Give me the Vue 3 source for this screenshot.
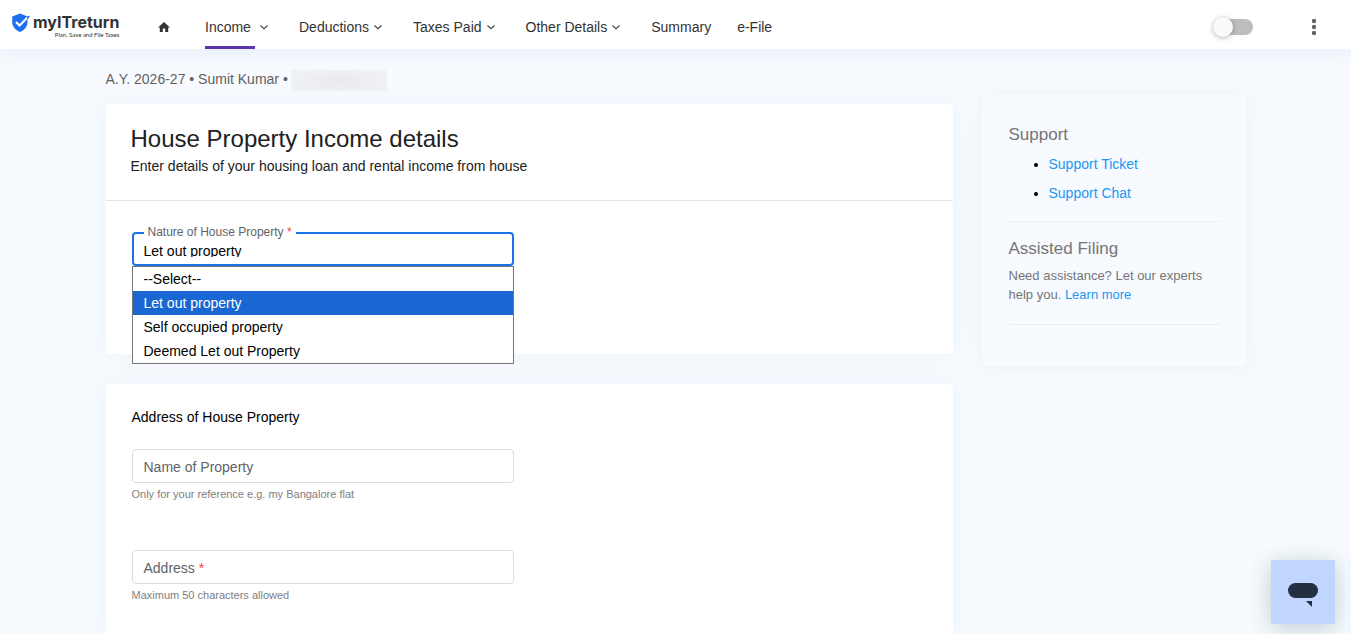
<script setup>
import { ref } from 'vue'

const menus = [
  { label: 'Income', href: '#income', active: true, caret: true },
  { label: 'Deductions', href: '#deductions', caret: true },
  { label: 'Taxes Paid', href: '#taxes', caret: true },
  { label: 'Other Details', href: '#other', caret: true },
  { label: 'Summary', href: '#summary' },
  { label: 'e-File', href: '#efile' },
]

const options = ['--Select--', 'Let out property', 'Self occupied property', 'Deemed Let out Property']
const nature = ref('Let out property')
const propertyName = ref('')
const address = ref('')
const enabled = ref(false)
</script>

<template>
  <div class="page">
    <header class="topbar">
      <a class="brand" href="#home" aria-label="myITreturn">
        <svg class="shield" viewBox="0 0 18 20" aria-hidden="true">
          <path fill="#1d6ff2" d="M8 .500 15.500 3.500V9c0 4.500-2.900 8-7.500 10C3.400 17 .200 13.500 .200 9V3.500Z" />
          <path fill="none" stroke="#fff" stroke-width="2.200" d="M4 9l3.500 3.500L16 4" />
          <path fill="#1d6ff2" d="M14.800 3.600 18.300 2.600 15.600 6.800Z" />
        </svg>
        <span class="brand-text">
          <span class="brand-name">myITreturn</span>
          <span class="brand-tag">Plan, Save and File Taxes</span>
        </span>
      </a>
      <nav class="nav">
        <a class="home" href="#dashboard" aria-label="Home">
          <svg viewBox="0 0 12 10" aria-hidden="true">
            <path fill="#333" d="M6 0 12 5.400H10.200V10H7.200V6.600H4.800V10H1.800V5.400H0Z" />
          </svg>
        </a>
        <a v-for="m in menus" :key="m.label" class="item" :class="{ active: m.active }" :href="m.href">
          <span class="item-label">{{ m.label }}</span>
          <svg v-if="m.caret" class="caret" viewBox="0 0 18 18" aria-hidden="true">
            <path fill="none" stroke="#444" stroke-width="1.200" d="M5.500 7.500 9 10.800l3.500-3.300" />
          </svg>
        </a>
      </nav>
      <input v-model="enabled" class="toggle" type="checkbox" role="switch" aria-label="Switch mode" />
      <button class="more" type="button" aria-label="More options">
        <svg viewBox="0 0 6 18" aria-hidden="true">
          <g fill="#5f6368"><circle cx="3" cy="3" r="2.200" /><circle cx="3" cy="9" r="2.200" /><circle cx="3" cy="15" r="2.200" /></g>
        </svg>
      </button>
    </header>

    <div class="layout">
      <main class="main">
        <p class="crumbs">A.Y. 2026-27 • Sumit Kumar • <span class="masked"></span></p>

        <section class="card details">
          <div class="card-head">
            <h1>House Property Income details</h1>
            <p>Enter details of your housing loan and rental income from house</p>
          </div>
          <div class="card-body">
            <div class="select-field">
              <label for="nature">Nature of House Property <span class="req">*</span></label>
              <select id="nature" v-model="nature">
                <option v-for="o in options" :key="o">{{ o }}</option>
              </select>
              <ul class="options" role="listbox" aria-label="Nature of House Property">
                <li v-for="o in options" :key="o" role="option" :aria-selected="o === nature" :class="{ chosen: o === nature }" @click="nature = o">{{ o }}</li>
              </ul>
            </div>
          </div>
        </section>

        <section class="card address">
          <h2>Address of House Property</h2>
          <div class="fields">
            <div class="text-field">
              <div class="box">
                <label v-show="!propertyName" for="pname">Name of Property</label>
                <input id="pname" v-model="propertyName" type="text" />
              </div>
              <small>Only for your reference e.g. my Bangalore flat</small>
            </div>
            <div class="text-field">
              <div class="box">
                <label v-show="!address" for="addr">Address <span class="req">*</span></label>
                <input id="addr" v-model="address" type="text" maxlength="50" />
              </div>
              <small>Maximum 50 characters allowed</small>
            </div>
          </div>
        </section>
      </main>

      <aside class="side">
        <h2>Support</h2>
        <ul>
          <li><a href="#ticket">Support Ticket</a></li>
          <li><a href="#chat">Support Chat</a></li>
        </ul>
        <hr />
        <h2>Assisted Filing</h2>
        <p>Need assistance? Let our experts help you. <a href="#experts">Learn more</a></p>
        <hr />
      </aside>
    </div>

    <button class="chat" type="button" aria-label="Open chat">
      <svg viewBox="0 0 64 64" aria-hidden="true">
        <rect x="17" y="23" width="30" height="15" rx="7.500" fill="#242f42" />
        <path fill="#242f42" d="M35 41h6v6Z" />
      </svg>
    </button>
  </div>
</template>

<style>
body {
  margin: 0;
  background: #f7fbff;
}
</style>

<style scoped>
.page {
  display: flex;
  flex-direction: column;
  min-height: 100vh;
  font-family: "Liberation Sans", Arial, sans-serif;
  font-size: 14px;
  color: #212121;
}
.page *,
.page *::before {
  box-sizing: border-box;
}
h1,
h2,
p,
ul {
  margin: 0;
  padding: 0;
  font-weight: 400;
}
a {
  color: #2196f3;
  text-decoration: none;
}
button {
  padding: 0;
  border: 0;
  background: none;
}
.topbar {
  display: flex;
  align-items: center;
  height: 49px;
  padding: 0 34px 0 12px;
  background: #fff;
  box-shadow: 0 0 24px rgba(40, 80, 160, 0.1);
}
.brand {
  display: flex;
  gap: 3px;
  width: 143px;
  margin-top: 2px;
  color: #333;
}
.shield {
  width: 18px;
  height: 20px;
}
.brand-text {
  display: flex;
  flex-direction: column;
  align-items: flex-end;
}
.brand-name {
  font-family: Inter, sans-serif;
  font-size: 16px;
  font-weight: 700;
  line-height: 19px;
}
.brand-tag {
  font-family: Lato, sans-serif;
  font-size: 6px;
  line-height: 6px;
}
.nav {
  display: flex;
  align-self: stretch;
  flex: 1;
}
.home {
  display: flex;
  align-items: center;
  width: 37px;
  padding: 4px 0 0 3px;
}
.home svg {
  width: 12px;
  height: 10px;
}
.item {
  display: flex;
  align-items: center;
  padding: 0 13px;
  color: #333;
  white-space: nowrap;
}
.item-label {
  display: flex;
  align-items: center;
  height: 100%;
  padding: 9px 0 2px;
  border-bottom: 3px solid transparent;
}
.active .item-label {
  width: 50px;
  border-color: #5e35b1;
}
.caret {
  width: 18px;
  height: 18px;
  margin-top: 4px;
}
.toggle {
  appearance: none;
  display: flex;
  align-items: center;
  width: 36px;
  height: 16px;
  margin: 4px 58px 0 0;
  border-radius: 8px;
  background: #bdbdbd;
}
.toggle::before {
  content: "";
  flex: none;
  width: 20px;
  height: 20px;
  margin-left: -4px;
  border-radius: 50%;
  background: #fafafa;
  box-shadow: 0 1px 5px rgba(0, 0, 0, 0.3);
}
.toggle:checked::before {
  margin-left: 20px;
}
.more {
  width: 6px;
  height: 18px;
  margin-top: 4px;
}
.more svg {
  display: block;
}
.layout {
  display: grid;
  grid-template-columns: minmax(0, 1fr) 264px;
  gap: 29px;
  flex: 1;
  width: 100%;
  max-width: 1140px;
  margin: 0 auto;
}
.main {
  display: flex;
  flex-direction: column;
}
.crumbs {
  display: flex;
  gap: 3px;
  height: 21px;
  margin: 21px 0 13px;
  color: #616161;
  line-height: 18px;
}
.masked {
  width: 96px;
  height: 21px;
  background: radial-gradient(ellipse, #e8eaf0, #f1f3f8);
}
.card {
  border-radius: 4px;
  background: #fff;
  box-shadow: 0 0 24px rgba(40, 80, 140, 0.06);
}
.details {
  min-height: 250px;
  margin-bottom: 30px;
}
.card-head {
  height: 97px;
  padding: 20px 25px;
  border-bottom: 1px solid #e4e5e7;
}
h1 {
  font-size: 24px;
  line-height: 30px;
}
.card-head p {
  line-height: 24px;
}
.card-body {
  display: grid;
  grid-template-columns: 1fr 1fr;
  gap: 31px;
  padding: 31px 26px;
}
.select-field {
  position: relative;
  height: 34px;
  padding: 9px 10px 0 8px;
  border: 2px solid #1a73e8;
  border-radius: 4px;
}
.select-field label {
  position: absolute;
  top: -9px;
  left: 10px;
  padding: 0 4px;
  background: #fff;
  color: #5f6368;
  font-size: 12px;
  line-height: 14px;
}
.req {
  color: #f44336;
}
select {
  appearance: none;
  display: block;
  width: 100%;
  height: 14px;
  padding: 0 2px;
  border: 0;
  outline: 0;
  background: transparent;
  color: #000;
  font: inherit;
}
.options {
  position: absolute;
  z-index: 2;
  top: 32px;
  left: -2px;
  right: -2px;
  border: 1px solid #757575;
  background: #fff;
  color: #000;
  list-style: none;
}
.options li {
  padding: 0 11px;
  line-height: 24px;
}
.options .chosen {
  background: #1967d2;
  color: #fff;
}
.address {
  flex: 1;
  padding: 22px 26px 29px;
  border-radius: 4px 4px 0 0;
}
.address h2 {
  color: #000;
  font-size: 14px;
  line-height: 22px;
}
.fields {
  display: grid;
  grid-template-rows: 101px auto;
  width: calc(50% - 15px);
  margin-top: 21px;
}
.box {
  position: relative;
  height: 34px;
  border: 1px solid #dadce0;
  border-radius: 4px;
}
.box label {
  position: absolute;
  top: 0;
  left: 11px;
  color: #5f6368;
  line-height: 34px;
}
.box input {
  width: 100%;
  height: 100%;
  padding: 0 10px;
  border: 0;
  outline: 0;
  background: transparent;
  font: inherit;
}
.text-field small {
  display: block;
  margin-top: 4px;
  color: #808080;
  font-size: 11px;
  line-height: 14px;
}
.side {
  align-self: start;
  min-height: 272px;
  margin-top: 45px;
  padding: 28px 26px 40px 27px;
  border-radius: 4px;
  box-shadow: 0 2px 20px rgba(40, 60, 100, 0.06);
  color: #757575;
}
.side h2 {
  padding-top: 1px;
  font-size: 17px;
  line-height: 24px;
}
.side ul {
  margin-top: 3px;
  padding-left: 40px;
}
.side li {
  height: 29px;
  line-height: 29px;
}
.side li::marker {
  color: #000;
}
.side hr {
  height: 1px;
  margin: 13px 0 14px;
  border: 0;
  background: #eceef0;
}
.side p {
  margin-top: 5px;
  font-size: 13px;
  line-height: 19px;
}
.side p + hr {
  margin: 20px 0 0;
}
.chat {
  position: fixed;
  right: 16px;
  bottom: 10px;
  width: 64px;
  height: 64px;
  background: #c0d5ff;
  box-shadow: 0 4px 24px rgba(2, 60, 60, 0.24);
}
.chat svg {
  display: block;
}
</style>
